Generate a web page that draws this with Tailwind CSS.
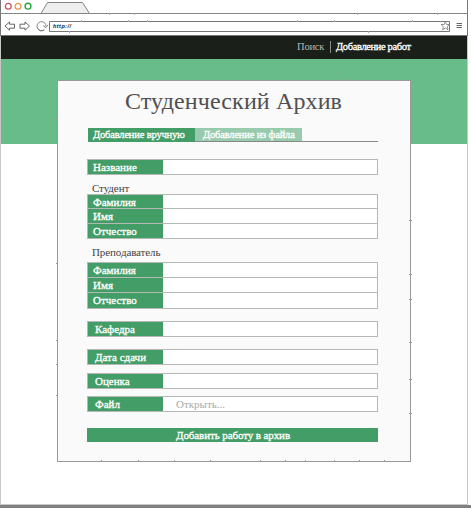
<!DOCTYPE html>
<html lang="ru">
<head>
<meta charset="utf-8">
<title>Студенческий Архив</title>
<script src="https://cdn.jsdelivr.net/npm/@tailwindcss/browser@4"></script>
</head>
<body class="w-[471px] h-[508px] overflow-hidden bg-white font-['Liberation_Serif',serif] text-[11px] leading-[14px]">
<div class="flex flex-col h-[508px] border-b-3 border-[#808080]">
<div class="relative flex flex-col w-[468px] h-[505px] border-l border-r border-b border-[#c8c8c8]">
  <!-- tab strip and address bar -->
  <svg class="block shrink-0 -ml-px w-[468px] h-[36px]" viewBox="0 0 468 36" fill="none">
    <path d="M.5 0V36M467.5 0V36" stroke="#777"/>
    <path d="M0 13.5H468" stroke="#858585"/>
    <path d="M41 13.5L47.5 2.5H82.5L89.5 13.5Z" fill="#eeeeee" stroke="#858585"/>
    <circle cx="8.3" cy="6.2" r="2.9" stroke="#c65365" stroke-width="1.3"/>
    <circle cx="18" cy="6.2" r="2.9" stroke="#e9944b" stroke-width="1.3"/>
    <circle cx="28" cy="6.2" r="2.9" stroke="#25a63b" stroke-width="1.4"/>
    <path d="M5 26L9.5 22V24.2H14.5V28.2H9.5V30.2Z" stroke="#555" stroke-width=".9"/>
    <path d="M29.5 26L25 22V24.2H20V28.2H25V30.2Z" stroke="#555" stroke-width=".9"/>
    <path d="M46 26.5A4.500 4.500 0 1 0 44.500 29.500M44 30.400A5 5 0 0 1 37.500 28.500M43 25.500L45.800 27.700L48 24.800" stroke="#777" stroke-width=".9"/>
    <path d="M49.5 21.5H449.5V31.5H49.5Z" stroke="#777"/>
    <path d="M81.5 20V22M128.500 20V22M147.500 20V22M297.500 20V22M334.500 20V22M412.500 20V22M109.500 13V15M134.500 13V15M357.500 13V15M437.500 13V15M69.500 31V33M368.500 31V33" stroke="#aaa"/>
    <path d="M445.300 21.500L446.500 24.500H449.500L447.200 26.600L448 29.800L445.300 28L442.500 29.800L443.400 26.600L441 24.500H444.200Z" fill="#fff" stroke="#777" stroke-width=".8"/>
    <path d="M456.500 23.500H462M456.500 25.500H462M456.500 27.500H462" stroke="#555" stroke-width=".9"/>
    <text x="53" y="27.500" fill="#111" font-family="Liberation Sans" font-size="5.500" font-weight="bold" font-style="italic" textLength="18">http://</text>
    <path d="M0 35.500H468" stroke="#777"/>
  </svg>
  <nav class="flex shrink-0 h-[23px] pt-[4px] pl-[296px] bg-[#1a1f1a] text-[#b5b8b5] text-[10.5px]">
    <span class="w-[33px] whitespace-nowrap tracking-[-0.2px]">Поиск</span>
    <span class="w-px h-[12px] mt-px bg-[#8a8d8a]"></span>
    <span class="ml-[5px] whitespace-nowrap tracking-[-0.37px] text-white [-webkit-text-stroke:0.3px_white]">Добавление работ</span>
  </nav>
  <div class="shrink-0 h-[85px] bg-[#67bc8a]"></div>
  <main class="relative -mt-[64px] ml-[56px] w-[354px] h-[382px] shrink-0 flex flex-col pl-[29px] bg-[#fafafa] border border-[#999]">
    <!-- pencil ticks along the card outline -->
    <svg class="absolute -left-[3px] -top-[3px] w-[358px] h-[386px]" viewBox="0 0 358 386" fill="none" stroke="#999">
      <path d="M64.500 1V3M106.500 1V3M148.500 1V3M232.500 1V3M268.500 1V3M291.500 1V3M46.500 382V384M83.500 382V384M119.500 382V384M155.500 382V384M205.500 382V384M230.500 382V384M250.500 382V384M279.500 382V384M304.500 382V384M329.500 382V384M1 41.500H3M1 185.500H3M1 262.500H3M1 286.500H3M1 317.500H3M354 142.500H357M354 196.500H357M354 221.500H357M354 264.500H357M354 301.500H357M354 335.500H357"/>
    </svg>
    <h1 class="mt-[5px] h-[30px] pl-[38px] text-[24px] leading-[30px] tracking-[0.12px] text-[#505050] whitespace-nowrap">Студенческий Архив</h1>
    <div class="flex mt-[12px] ml-px w-[290px] h-[14px] border-b border-[#888] text-white text-[10.5px] leading-[13px] whitespace-nowrap [-webkit-text-stroke:0.3px_white]">
      <div class="w-[107px] h-[14px] pl-[5px] tracking-[-0.18px] bg-[#439d67]">Добавление вручную</div>
      <div class="w-[107px] h-[13px] pl-[8px] tracking-[-0.18px] bg-[#98cbad]">Добавление из файла</div>
    </div>
    <div class="mt-[17px] w-[291px] h-[16px] flex bg-white border border-[#b5b9b6]"><div class="w-[75px] pl-[5px] bg-[#439d67] text-white [-webkit-text-stroke:0.3px_white]">Название</div></div>
    <div class="mt-[6px] h-[13px] pl-[5px] tracking-[-0.1px] text-[#444]">Студент</div>
    <div class="w-[291px] h-[45px] grid grid-rows-3 bg-white border border-[#b5b9b6] divide-y divide-[#b5b9b6] text-white [-webkit-text-stroke:0.3px_white]">
      <div class="flex"><div class="w-[75px] pl-[5px] bg-[#439d67]">Фамилия</div></div>
      <div class="flex"><div class="w-[75px] pl-[5px] bg-[#439d67]">Имя</div></div>
      <div class="flex"><div class="w-[75px] pl-[5px] bg-[#439d67]">Отчество</div></div>
    </div>
    <div class="mt-[6px] h-[17px] pl-[5px] tracking-[-0.1px] text-[#444]">Преподаватель</div>
    <div class="w-[291px] h-[47px] grid grid-rows-3 bg-white border border-[#b5b9b6] divide-y divide-[#b5b9b6] text-white [-webkit-text-stroke:0.3px_white]">
      <div class="flex"><div class="w-[75px] pl-[5px] bg-[#439d67]">Фамилия</div></div>
      <div class="flex"><div class="w-[75px] pl-[5px] bg-[#439d67]">Имя</div></div>
      <div class="flex"><div class="w-[75px] pl-[5px] bg-[#439d67]">Отчество</div></div>
    </div>
    <div class="mt-[12px] w-[291px] h-[16px] flex bg-white border border-[#b5b9b6]"><div class="w-[75px] pl-[7px] bg-[#439d67] text-white [-webkit-text-stroke:0.3px_white]">Кафедра</div></div>
    <div class="mt-[12px] w-[291px] h-[16px] flex bg-white border border-[#b5b9b6]"><div class="w-[75px] pl-[7px] bg-[#439d67] text-white [-webkit-text-stroke:0.3px_white]">Дата сдачи</div></div>
    <div class="mt-[8px] w-[291px] h-[16px] flex bg-white border border-[#b5b9b6]"><div class="w-[75px] pl-[7px] bg-[#439d67] text-white [-webkit-text-stroke:0.3px_white]">Оценка</div></div>
    <div class="mt-[7px] w-[291px] h-[16px] flex bg-white border border-[#b5b9b6]"><div class="w-[75px] pl-[7px] bg-[#439d67] text-white [-webkit-text-stroke:0.3px_white]">Файл</div><div class="pl-[13px] text-[#aaa]">Открыть...</div></div>
    <button class="mt-[16px] w-[291px] h-[14px] pl-[89px] text-left leading-[13px] whitespace-nowrap tracking-[-0.1px] bg-[#439d67] text-white [-webkit-text-stroke:0.3px_white]">Добавить работу в архив</button>
  </main>
</div>
</div>
</body>
</html>
